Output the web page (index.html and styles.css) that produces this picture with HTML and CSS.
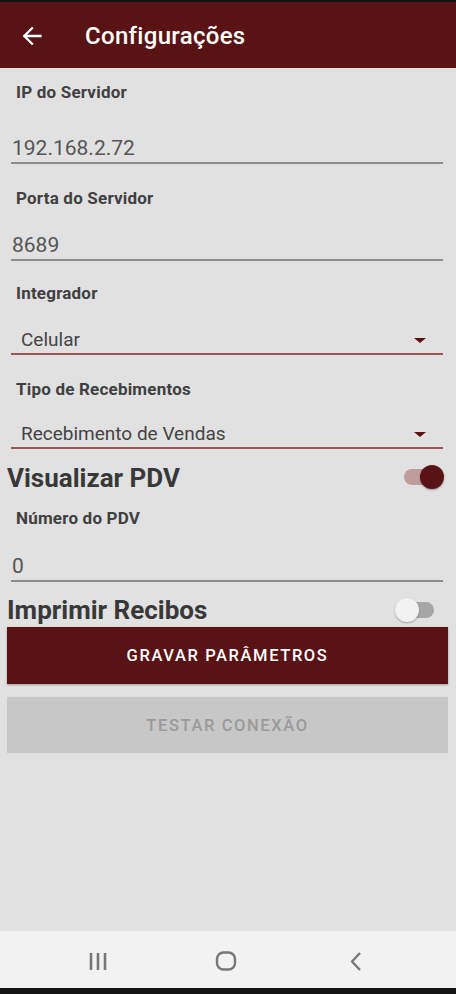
FILE: index.html
```html
<!DOCTYPE html>
<html lang="pt">
<head>
<meta charset="utf-8">
<title>Configurações</title>
<link rel="stylesheet" href="styles.css">
</head>
<body>
<div class="screen">
  <div class="status"></div>
  <header class="appbar">
    <svg class="back" width="20" height="20" viewBox="0 0 20 20"><path d="M18.5 10H2.5M10 2.3L2.3 10L10 17.7" fill="none" stroke="#fff" stroke-width="2.3" stroke-linecap="square"/></svg>
    <h1 class="title">Configurações</h1>
  </header>

  <main class="form">
    <div class="label l1">IP do Servidor</div>
    <div class="field f1">192.168.2.72</div>

    <div class="label l2">Porta do Servidor</div>
    <div class="field f2">8689</div>

    <div class="label l3">Integrador</div>
    <div class="select s1"><span>Celular</span><i class="caret"></i></div>

    <div class="label l4">Tipo de Recebimentos</div>
    <div class="select s2"><span>Recebimento de Vendas</span><i class="caret"></i></div>

    <div class="switch-row r1">
      <span class="switch-label">Visualizar PDV</span>
      <span class="switch on"><span class="track"></span><span class="thumb"></span></span>
    </div>

    <div class="label l5">Número do PDV</div>
    <div class="field f3">0</div>

    <div class="switch-row r2">
      <span class="switch-label">Imprimir Recibos</span>
      <span class="switch off"><span class="track"></span><span class="thumb"></span></span>
    </div>

    <button class="btn primary">GRAVAR PARÂMETROS</button>
    <button class="btn disabled">TESTAR CONEXÃO</button>
  </main>

  <nav class="navbar">
    <svg width="20" height="20" viewBox="0 0 20 20"><path d="M3 2v17M10 2v17M17 2v17" stroke="#777" stroke-width="2.6" fill="none"/></svg>
    <svg width="22" height="20" viewBox="0 0 22 20"><rect x="2" y="1.5" width="18" height="17" rx="6.5" stroke="#777" stroke-width="2.4" fill="none"/></svg>
    <svg width="14" height="20" viewBox="0 0 14 20"><path d="M11 2L3 10.5L11 19" stroke="#777" stroke-width="2.4" fill="none" stroke-linejoin="round"/></svg>
  </nav>
  <div class="bottom"></div>
</div>
</body>
</html>
```

FILE: styles.css
```css
* { box-sizing: border-box; }
html, body { margin: 0; padding: 0; }
body {
  background: #e1e1e1;
  font-family: Roboto, "Noto Sans", "Liberation Sans", sans-serif;
}
.screen {
  width: 456px;
  height: 994px;
  display: flex;
  flex-direction: column;
  background: #e1e1e1;
}
.status { height: 2px; background: #141414; }
.appbar {
  height: 66px;
  background: #5a1315;
  display: flex;
  align-items: center;
  padding-left: 22px;
}
.back { display: block; margin-top: 1px; }
.title {
  margin: 0 0 0 43px;
  padding-top: 2px;
  color: #fff;
  font-size: 24px;
  font-weight: 500;
  letter-spacing: 0.3px;
  line-height: 30px;
}
.form {
  flex: 1;
  display: flex;
  flex-direction: column;
}
.label {
  margin-left: 16px;
  font-size: 17px;
  font-weight: 700;
  letter-spacing: 0.2px;
  line-height: 20px;
  height: 20px;
  color: #404040;
}
.field {
  margin: 0 13px 0 11px;
  padding-left: 1px;
  font-size: 21px;
  line-height: 28px;
  height: 30px;
  color: #555;
  border-bottom: 2px solid #8c8c8c;
}
.select {
  margin: 0 13px 0 11px;
  padding: 0 17px 0 10px;
  font-size: 19px;
  line-height: 26px;
  height: 28px;
  color: #444;
  border-bottom: 2px solid #9d5555;
  display: flex;
  align-items: center;
  justify-content: space-between;
}
.caret {
  width: 0; height: 0;
  border-left: 6px solid transparent;
  border-right: 6px solid transparent;
  border-top: 5px solid #5a1315;
  margin-top: 1px;
}
.l1 { margin-top: 14px; }
.f1 { margin-top: 32px; }
.l2 { margin-top: 24px; }
.f2 { margin-top: 23px; }
.l3 { margin-top: 22px; }
.s1 { margin-top: 24px; }
.l4 { margin-top: 24px; }
.s2 { margin-top: 21.5px; }
.switch-row {
  height: 32px;
  margin: 0 13px 0 7px;
  display: flex;
  align-items: center;
  justify-content: space-between;
}
.switch-label {
  font-size: 26px;
  font-weight: 700;
  line-height: 32px;
  color: #383838;
}
.r1 { margin-top: 13.5px; }
.l5 { margin-top: 14px; }
.f3 { margin-top: 24px; }
.r2 { margin-top: 11.5px; }
.switch { position: relative; width: 40px; height: 24px; }
.track {
  position: absolute;
  top: 4px; height: 16px;
  border-radius: 8px;
}
.thumb {
  position: absolute;
  top: 0;
  width: 24px; height: 24px;
  border-radius: 50%;
}
.on { margin-right: -1px; margin-top: -2px; }
.on .track { left: 0; width: 36px; background: #bf9d9d; }
.on .thumb { right: 0; background: #5a1315; box-shadow: 0 1px 2px rgba(0,0,0,0.35); }
.off { margin-right: 8px; }
.off .track { left: 3px; width: 36px; background: #a6a6a6; }
.off .thumb { left: 0; background: #f2f2f2; box-shadow: 0 1px 2px rgba(0,0,0,0.3); }
.btn {
  display: block;
  margin: 0 8px 0 7px;
  border: 0;
  font-family: inherit;
  font-size: 16.5px;
  font-weight: 500;
  letter-spacing: 1.6px;
  text-align: center;
  padding: 0;
}
.primary {
  margin-top: 1.5px;
  height: 57px;
  background: #5a1315;
  color: #fff;
  box-shadow: 0 1px 2px rgba(0,0,0,0.3);
}
.disabled {
  margin-top: 13px;
  height: 56px;
  background: #c7c7c7;
  color: #9a9a9a;
}
.navbar {
  height: 57px;
  background: #f2f2f2;
  display: flex;
  align-items: center;
  padding-top: 3px;
}
.navbar svg:nth-child(1) { margin-left: 88px; }
.navbar svg:nth-child(2) { margin-left: 107px; }
.navbar svg:nth-child(3) { margin-left: 112px; }
.bottom { height: 6px; background: #141414; }
```
